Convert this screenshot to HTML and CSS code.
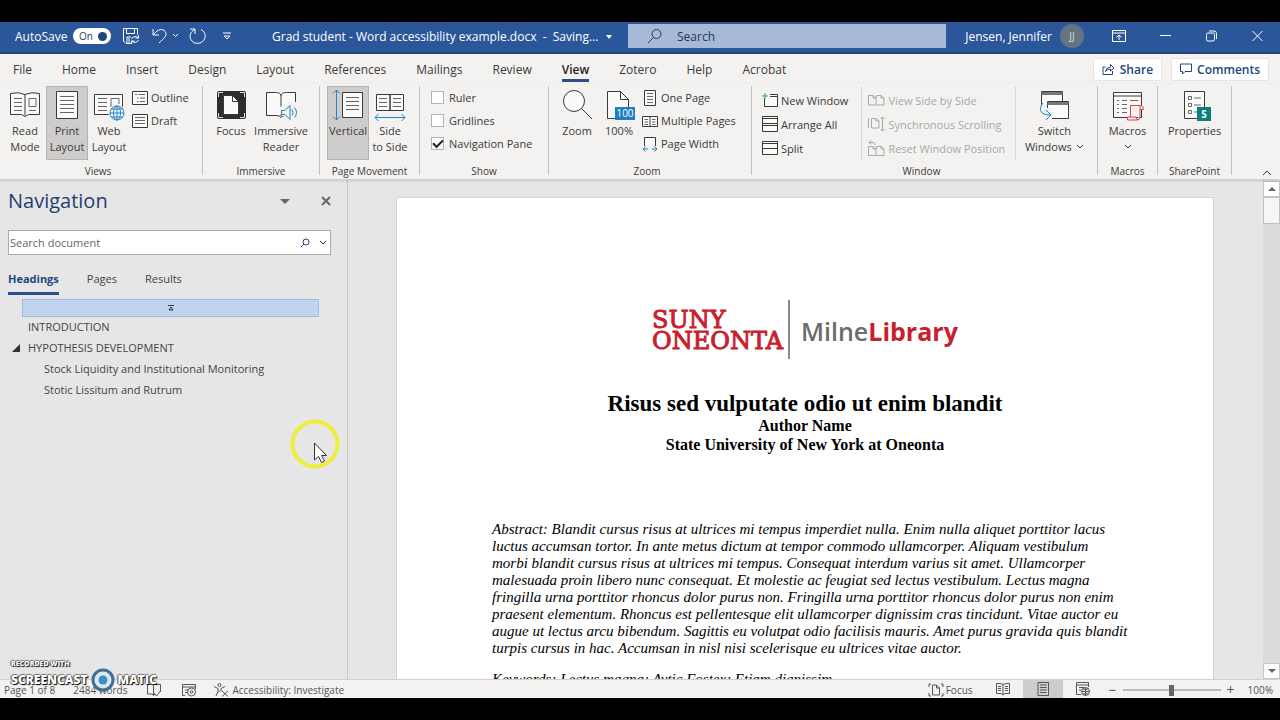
FILE: index.html
```html
<!DOCTYPE html>
<html lang="en">
<head>
<meta charset="utf-8">
<title>Grad student - Word accessibility example.docx</title>
<link rel="stylesheet" href="styles.css">
</head>
<body>
<div class="app">
  <header class="titlebar">
    <div class="quick">
      <label class="autosave" for="autosave">AutoSave</label>
      <button class="toggle" id="autosave" aria-pressed="true">On<span class="knob"></span></button>
      <button class="qbtn" aria-label="Save"><svg width="18" height="18" viewBox="0 0 18 18"><path d="M9 16.500H4L1.500 14V1.500h14v6M4.500 1.500v5h8v-5M5 16v-6h4M7 11v5"/><path d="M9.500 12a4 3.500 0 0 1 7-1M16.500 8v3h-3M16.500 13a4 3.500 0 0 1-7 1M9.500 17v-3h3"/></svg></button>
      <button class="qbtn undo" aria-label="Undo"><svg width="28" height="18" viewBox="0 0 28 18"><path d="M2 2v6h6M2 8l4-4c4-3 9-1 9 3 0 3-2 4-7 9M22 7l2.500 2.500L27 7"/></svg></button>
      <button class="qbtn redo" aria-label="Repeat"><svg width="18" height="18" viewBox="0 0 18 18"><path d="M1 2h5v5M6 2.500C0 5 0 11 3 14c3 3.500 9 3 12-1 3-5 0-9-3-10.500"/></svg></button>
      <button class="qbtn more" aria-label="Customize toolbar"><svg width="8" height="8" viewBox="0 0 8 8"><path d="M0 1h8M1 4l3 3 3-3z"/></svg></button>
    </div>
    <div class="doctitle">Grad student - Word accessibility example.docx&nbsp; - &nbsp;Saving... <span class="caret"></span></div>
    <div class="search"><svg width="16" height="16" viewBox="0 0 16 16"><circle cx="9.500" cy="6" r="4.500"/><path d="M6.500 9.500L1 15"/></svg><input aria-label="Search" placeholder="Search"></div>
    <div class="account"><span>Jensen, Jennifer</span><span class="avatar">JJ</span></div>
    <div class="winbtns">
      <button aria-label="Ribbon display options"><svg width="14" height="12" viewBox="0 0 14 12"><path d="M.5.500h13v11H.5zM.5 3h13M7 10V5M4.500 7.500L7 5l2.500 2.500"/></svg></button>
      <button aria-label="Minimize"><svg width="11" height="12" viewBox="0 0 11 12"><path d="M0 5.500h11"/></svg></button>
      <button aria-label="Restore"><svg width="11" height="12" viewBox="0 0 11 12"><rect x=".5" y="3" width="8" height="8" rx="1.500"/><path d="M3 1h5q2.500 0 2.500 2.500V9"/></svg></button>
      <button aria-label="Close"><svg width="11" height="12" viewBox="0 0 11 12"><path d="M.5 1l10 10M10.500 1l-10 10"/></svg></button>
    </div>
  </header>

  <nav class="tabs">
    <button>File</button><button>Home</button><button>Insert</button><button>Design</button><button>Layout</button><button>References</button><button>Mailings</button><button>Review</button><button class="active">View</button><button>Zotero</button><button>Help</button><button>Acrobat</button>
    <div class="tabactions">
      <button class="pill"><svg width="13" height="12" viewBox="0 0 13 12"><path d="M3.500 4H1v7.500h9.500V8M3.500 8.500Q4 4.500 8.500 4V1.500L12 5 8.500 8V6Q5.500 6 3.500 8.500z"/></svg>Share</button>
      <button class="pill"><svg width="12" height="12" viewBox="0 0 12 12"><path d="M.5 1h11v7.500H5L2.500 11V8.500h-2z"/></svg>Comments</button>
    </div>
  </nav>

  <section class="ribbon" aria-label="View ribbon">
    <div class="group">
      <div class="tools">
        <button class="big"><svg width="32" height="32" viewBox="0 0 32 32"><path class="w" d="M1.500 4.500q8-2 14.500 1 6.500-3 14.500-1v21h-11L16 27.500l-3.500-2h-11z"/><path d="M16 5.500v21"/><path class="g" d="M5 9.500h8M5 13.500h8M5 17.500h8M5 21.500h8M20 9.500h7v8h-7zM20 21.500h7"/></svg><span>Read<br>Mode</span></button>
        <button class="big on"><svg width="32" height="32" viewBox="0 0 32 32"><path class="w" d="M5.500 2.500h21v27h-21z"/><path class="g" d="M9 7.500h14M9 11.500h14M9 15.500h14M9 19.500h14M9 23.500h14"/></svg><span>Print<br>Layout</span></button>
        <button class="big"><svg width="32" height="32" viewBox="0 0 32 32"><path class="w" d="M1.500 5.500h28v20h-28z"/><path class="g" d="M5 9.500h9M5 13.500h9M5 17.500h9M5 21.500h9M18 18V9.500h8V15"/><circle class="halo" cx="24" cy="24" r="8.500"/><g class="blue"><circle cx="24" cy="24" r="7"/><ellipse cx="24" cy="24" rx="3.500" ry="7"/><path d="M24 17v14M17 24h14M18 20h12M18 28h12"/></g></svg><span>Web<br>Layout</span></button>
        <div class="stack">
          <button class="small"><svg width="16" height="16" viewBox="0 0 16 16"><path class="w" d="M.5 1.500h15v13H.5z"/><path class="g" d="M3 4.500h2M6.500 4.500H13M5 8h1.500M8 8h5M5 11.500h1.500M8 11.500h5"/></svg>Outline</button>
          <button class="small"><svg width="16" height="16" viewBox="0 0 16 16"><path class="w" d="M.5 1.500h15v13H.5z"/><path class="g" d="M3 4.500h10M3 7.500h10M3 10.500h10"/></svg>Draft</button>
        </div>
      </div>
      <h2>Views</h2>
    </div>
    <div class="group immersive">
      <div class="tools">
        <button class="big"><svg width="32" height="32" viewBox="0 0 32 32"><rect class="dark" x="2" y="2" width="29" height="28" rx="2"/><path class="corner" d="M3.500 8V3.500H8M25 3.500h4.500V8M3.500 24v4.500H8M25 28.500h4.500V24"/><path class="w" d="M8.500 6.500h9l6 6v13h-15z"/><path d="M17.500 6.500v6h6"/></svg><span>Focus</span></button>
        <button class="big wide"><svg width="34" height="32" viewBox="0 0 34 32"><path class="w" d="M2.500 3.500h9q5 0 5.500 3 .5-3 5.500-3h9v23H22q-4 0-5 2-1-2-5-2H2.500z"/><path d="M17 6v21"/><path class="halofill" d="M16 18l9-5h9v17h-9l-9-5z"/><g class="blue"><path d="M17.500 21.500H21l5-5v14l-5-5h-3.500zM28 20.500q2 3 0 6M30.500 18.500q4 5 0 10"/></g></svg><span>Immersive<br>Reader</span></button>
      </div>
      <h2>Immersive</h2>
    </div>
    <div class="group movement">
      <div class="tools">
        <button class="big on"><svg width="32" height="32" viewBox="0 0 32 32"><path class="w" d="M10.500 3.500h20v25h-20z"/><path class="g" d="M14 8.500h13M14 12.500h13M14 16.500h13M14 20.500h13"/><path class="blue" d="M4.500 1v30M1 4.500L4.500 1 8 4.500M1 27.500L4.500 31 8 27.500"/></svg><span>Vertical</span></button>
        <button class="big"><svg width="32" height="32" viewBox="0 0 32 32"><path class="w" d="M2.500 5.500h13.500v16H2.500zM16 5.500h13.500v16H16z"/><path class="g" d="M5 9.500h8M5 13.500h8M5 17.500h8M19 9.500h8M19 13.500h8M19 17.500h8"/><path class="blue" d="M1 28.500h30M4.500 25L1 28.500 4.500 32M27.500 25l3.500 3.500-3.500 3.500"/></svg><span>Side<br>to Side</span></button>
      </div>
      <h2>Page Movement</h2>
    </div>
    <div class="group show">
      <div class="tools">
        <div class="stack">
          <label class="check"><input type="checkbox">Ruler</label>
          <label class="check"><input type="checkbox">Gridlines</label>
          <label class="check"><input type="checkbox" checked>Navigation Pane</label>
        </div>
      </div>
      <h2>Show</h2>
    </div>
    <div class="group zoom">
      <div class="tools">
        <button class="big"><svg width="32" height="32" viewBox="0 0 32 32"><circle class="w" cx="13" cy="12" r="10.500"/><path d="M20.500 19.500L31 30"/></svg><span>Zoom</span></button>
        <button class="big"><svg width="32" height="32" viewBox="0 0 32 32"><path class="w" d="M4.500 2.500h13l8 8v19h-21z"/><path d="M17.500 2.500v8h8"/><rect class="bluefill" x="12" y="18" width="20" height="13"/><text x="22" y="28" class="badge">100</text></svg><span>100%</span></button>
        <div class="stack">
          <button class="small"><svg width="16" height="16" viewBox="0 0 16 16"><path class="w" d="M2.500.500h11v15h-11z"/><path class="g" d="M5 3.500h6M5 6.500h6M5 9.500h6M5 12.500h6"/></svg>One Page</button>
          <button class="small"><svg width="16" height="16" viewBox="0 0 16 16"><path class="w" d="M.5 3.500h15v10H.5zM8 3.500v10"/><path class="g" d="M2.500 6.500h3.500M2.500 9h3.500M2.500 11.500h3.500M10 6.500h3.500M10 9h3.500M10 11.500h3.500"/></svg>Multiple Pages</button>
          <button class="small"><svg width="16" height="16" viewBox="0 0 16 16"><path class="w" d="M2.500 10V1.500h11V10"/><path class="blue" d="M1 13h5M10 13h5M3.500 10.500L1 13l2.500 2.500M12.500 10.500L15 13l-2.500 2.500"/></svg>Page Width</button>
        </div>
      </div>
      <h2>Zoom</h2>
    </div>
    <div class="group window">
      <div class="tools">
        <div class="stack tall">
          <button class="small"><svg width="16" height="16" viewBox="0 0 16 16"><path class="w" d="M2.500 6v8.500h13V2.500H8"/><path d="M8 4.500h7"/><path class="green" d="M0 4h6M3 1v6"/></svg>New Window</button>
          <button class="small"><svg width="16" height="16" viewBox="0 0 16 16"><path class="w" d="M.5.500h15v7H.5zM.5 7.500h15v8H.5z"/><path d="M0 2.500h16M0 9.500h16"/></svg>Arrange All</button>
          <button class="small"><svg width="16" height="16" viewBox="0 0 16 16"><path class="w" d="M.5 1.500h15v13H.5z"/><path d="M0 3.500h16M0 8.500h16"/></svg>Split</button>
        </div>
        <div class="stack tall ruled">
          <button class="small" disabled><svg width="17" height="16" viewBox="0 0 17 16"><path d="M.5 3.500H5L8 6v7H.500zM5 3.500V6h3M8.500 6V3.500H13L16 6v7H8.500M13 3.500V6h3"/></svg>View Side by Side</button>
          <button class="small" disabled><svg width="17" height="16" viewBox="0 0 17 16"><path d="M.5 2v10M3.500 2.500H8L11 5v7H3.500zM8 2.500V5h3M14.500 1v14M12.500 3l2-2 2 2M12.500 13l2 2 2-2"/></svg>Synchronous Scrolling</button>
          <button class="small" disabled><svg width="17" height="16" viewBox="0 0 17 16"><path d="M.5 6.500H5L8 9v6.500H.5zM5 6.500V9h3M8.500 9V6.500H13L16 9v6.500H8.500M13 6.500V9h3M1 2.500h4q2 0 2 3M3 .500l-2 2 2 2"/></svg>Reset Window Position</button>
        </div>
        <button class="big switch"><svg width="32" height="32" viewBox="0 0 32 32"><path class="w" d="M3.500 16V2.500h21V12"/><path class="bar" d="M3.500 4.500h21"/><path class="w" d="M9.500 12.500h21v17h-21z"/><path class="bar" d="M9.500 14.500h21"/><path class="halofill" d="M2 19h12v11H2z"/><path class="blue" d="M5 14c-5 6-3 12 7 12M8 21l5 5-5 5"/></svg><span>Switch</span><span class="with">Windows <svg class="chev" width="8" height="6" viewBox="0 0 8 6"><path d="M1 1l3 3 3-3"/></svg></span></button>
      </div>
      <h2>Window</h2>
    </div>
    <div class="group macros">
      <div class="tools">
        <button class="big"><svg width="32" height="32" viewBox="0 0 32 32"><path class="w" d="M1.500 3.500h28v25h-28z"/><path d="M1.500 7h28"/><path class="g" d="M5 11.500h2M10 11.500h5M18 11.500h8M5 15.500h2M10 15.500h5M5 19.500h2M10 19.500h5M5 23.500h2M10 23.500h5"/><path class="red" d="M18.500 28V16.500H29q2.500 0 2.500 4H28M28 17v11q0 3-3 3h-9.500v-3H24q0 3 2 3"/></svg><span>Macros</span><svg class="chev" width="8" height="6" viewBox="0 0 8 6"><path d="M1 1l3 3 3-3"/></svg></button>
      </div>
      <h2>Macros</h2>
    </div>
    <div class="group sharepoint">
      <div class="tools">
        <button class="big wide"><svg width="32" height="32" viewBox="0 0 32 32"><path class="w" d="M5.500 2.500h20v27h-20z"/><path class="g" d="M9.500 7.500h3v3h-3zM15 9h7M9.500 14.500h3v3h-3zM15 16h7M9.500 21.500h3v3h-3zM15 23h4"/><rect class="teal" x="18" y="18" width="14" height="14"/><text x="25" y="29" class="badge s">S</text></svg><span>Properties</span></button>
      </div>
      <h2>SharePoint</h2>
    </div>
    <button class="collapse" aria-label="Collapse ribbon"><svg width="10" height="7" viewBox="0 0 10 7"><path d="M1 6l4-4 4 4"/></svg></button>
  </section>

  <main class="work">
    <aside class="navpane">
      <div class="navhead"><h1>Navigation</h1><button class="drop" aria-label="Pane options"></button><button aria-label="Close pane"><svg width="10" height="10" viewBox="0 0 10 10"><path d="M1 1l8 8M9 1L1 9"/></svg></button></div>
      <div class="navsearch"><input aria-label="Search document" placeholder="Search document"><button aria-label="Find"><svg width="10" height="10" viewBox="0 0 10 10"><circle cx="6" cy="4" r="3"/><path d="M4 6L1 9"/></svg></button><button aria-label="Search options"><svg class="chev" width="8" height="6" viewBox="0 0 8 6"><path d="M1 1l3 3 3-3"/></svg></button></div>
      <div class="navtabs"><button class="active">Headings</button><button>Pages</button><button>Results</button></div>
      <div class="totop"><svg width="6" height="6" viewBox="0 0 6 6"><path d="M0 .500h6M3 2l2 3H1z"/></svg></div>
      <ul class="tree">
        <li>INTRODUCTION</li>
        <li><span class="twist"></span>HYPOTHESIS DEVELOPMENT</li>
        <li class="sub">Stock Liquidity and Institutional Monitoring</li>
        <li class="sub">Stotic Lissitum and Rutrum</li>
      </ul>
      <svg class="pointer" width="52" height="52" viewBox="0 0 52 52"><circle cx="26" cy="26" r="22.500"/><path d="M25.500 25v17l4-3.500 3 6 3-1.500-3-5.500h5z"/></svg>
    </aside>
    <div class="canvas">
      <article class="page">
        <div class="logo"><div class="suny">SUNY<br>ONEONTA</div><div class="milne">Milne<b>Library</b></div></div>
        <h2>Risus sed vulputate odio ut enim blandit</h2>
        <p class="by">Author Name<br>State University of New York at Oneonta</p>
        <p class="abstract">Abstract: Blandit cursus risus at ultrices mi tempus imperdiet nulla. Enim nulla aliquet porttitor lacus<br>luctus accumsan tortor. In ante metus dictum at tempor commodo ullamcorper. Aliquam vestibulum<br>morbi blandit cursus risus at ultrices mi tempus. Consequat interdum varius sit amet. Ullamcorper<br>malesuada proin libero nunc consequat. Et molestie ac feugiat sed lectus vestibulum. Lectus magna<br>fringilla urna porttitor rhoncus dolor purus non. Fringilla urna porttitor rhoncus dolor purus non enim<br>praesent elementum. Rhoncus est pellentesque elit ullamcorper dignissim cras tincidunt. Vitae auctor eu<br>augue ut lectus arcu bibendum. Sagittis eu volutpat odio facilisis mauris. Amet purus gravida quis blandit<br>turpis cursus in hac. Accumsan in nisl nisi scelerisque eu ultrices vitae auctor.</p>
        <p class="abstract">Keywords: Lectus magna; Aytic Fostex; Etiam dignissim</p>
      </article>
      <div class="scroll"><button class="up" aria-label="Scroll up"></button><div class="thumb"></div><button class="down" aria-label="Scroll down"></button></div>
    </div>
  </main>

  <footer class="status">
    <span class="pageno">Page 1 of 8</span><span class="words">2484 words</span>
    <svg width="16" height="14" viewBox="0 0 16 14"><path d="M7.500 12.500L6 11H1.500V1.500H6L7.500 3v9.500L9 11M9 1.500h5.500V9M8 10l2.500 3L14.500 8"/></svg>
    <svg class="rec" width="16" height="14" viewBox="0 0 16 14"><path d="M4 12.500H1.500v-11h13V6M1.500 4h13M4 7h3M4 9.500h2"/><circle cx="10.500" cy="9" r="4"/><circle cx="10.500" cy="9" r="1.300"/></svg>
    <button class="access"><svg width="16" height="14" viewBox="0 0 16 14"><circle cx="6.500" cy="2" r="1.500"/><path d="M1 3.500l4 2v3L3 13M12 3.500l-4 2v3M5 9.500l2-2M9 8l6 5.500M15 8l-6 5.500"/></svg>Accessibility: Investigate</button>
    <div class="modes">
      <button class="focus"><svg width="16" height="14" viewBox="0 0 16 14"><path d="M3 1H1v3M13 1h2v3M1 10v3h2M15 10v3h-2M4.500 2h4l3 3v7h-7zM8.500 2v3h3"/></svg>Focus</button>
      <button class="mode" aria-label="Read mode"><svg width="14" height="14" viewBox="0 0 14 14"><path d="M7 2.500Q4 1 .500 1.500v10H5l2 1.500 2-1.500h4.500v-10Q10 1 7 2.500zM7 2.500V12M2 4.500h3M2 6.500h3M2 8.500h3M9 4.500h3M9 6.500h3M9 8.500h3"/></svg></button>
      <button class="mode on" aria-label="Print layout"><svg width="14" height="14" viewBox="0 0 14 14"><path d="M2 .500h10.500v13H2zM4 3h6.500M4 5.500h6.500M4 8h6.500M4 10.500h6.500"/></svg></button>
      <button class="mode" aria-label="Web layout"><svg width="14" height="14" viewBox="0 0 14 14"><path d="M5 12.500H.5v-12h12V5M.5 3h12M3 5.500h5M3 8h2"/><circle cx="9.500" cy="9.500" r="4"/><path d="M5.500 9.500h8M9.500 5.500v8M7 7q2.500 1 5 0M7 12q2.500-1 5 0"/></svg></button>
      <button class="step" aria-label="Zoom out">−</button><input type="range" min="10" max="190" value="100" aria-label="Zoom level"><button class="step" aria-label="Zoom in">+</button><span class="pct">100%</span>
    </div>
    <div class="mark"><small>RECORDED WITH</small><div>SCREENCAST<svg width="24" height="24" viewBox="0 0 24 24"><circle cx="12" cy="12" r="10"/><circle class="dot" cx="12" cy="12" r="4.500"/></svg>MATIC</div></div>
  </footer>
</div>
</body>
</html>
```

FILE: styles.css
```css
* { box-sizing: border-box; }
body { margin: 0; background: #000; font-family: "Open Sans", "Noto Sans", sans-serif; font-size: 12px; color: #3b3a39; }
button, input { font: inherit; color: inherit; }
button { border: 0; background: none; padding: 0; margin: 0; }
svg { display: block; flex: none; fill: none; stroke: currentColor; }
h1, h2, p, ul { margin: 0; padding: 0; font-weight: 400; }
.app { height: 100vh; padding: 22px 0; display: grid; grid-template-rows: 32px 30px 96px minmax(0, 1fr) 19px; }

.titlebar { background: #2b579a; border-bottom: 2px solid #204680; padding-bottom: 2px; color: #fff; display: grid; grid-template-columns: 272px 356px minmax(0, 318fr) 150px 184px; align-items: center; white-space: nowrap; }
.quick { display: flex; align-items: center; padding-left: 15px; }
.autosave { width: 58px; }
.toggle { display: flex; align-items: center; justify-content: space-between; width: 38px; height: 16px; padding: 0 4px 0 6px; border-radius: 8px; background: #fff; color: #2b3f63; font-size: 10px; }
.knob { width: 9px; height: 9px; border-radius: 50%; background: #204680; }
.qbtn { margin-left: 11px; }
.redo { margin-left: 10px; }
.more { margin-left: 16px; }
.caret { display: inline-block; margin: 0 0 2px 4px; border: 3px solid transparent; border-top: 4px solid #fff; border-bottom: 0; }
.search { height: 24px; background: #a6b9d6; color: #1f3864; display: flex; align-items: center; padding-left: 19px; gap: 14px; }
.search input { flex: 1; min-width: 0; border: 0; background: none; padding: 0; }
.search input::placeholder { color: #1f3864; opacity: 1; }
.account { display: flex; align-items: center; justify-content: flex-end; gap: 8px; padding-right: 12px; }
.avatar { width: 24px; height: 24px; border-radius: 50%; background: #65757f; color: #d5dade; font-size: 10px; line-height: 24px; text-align: center; }
.winbtns { display: grid; grid-template-columns: repeat(4, 1fr); justify-items: center; }

.tabs { background: #f3f2f1; display: flex; gap: 30px; padding: 0 11px 0 13px; align-items: stretch; white-space: nowrap; }
.tabs > button { border-top: 3px solid transparent; border-bottom: 3px solid transparent; margin-bottom: 2px; padding-top: 2px; }
.tabs > .active { border-bottom-color: #2b4f8c; font-weight: 600; color: #222; }
.tabactions { margin-left: auto; display: flex; gap: 9px; align-items: center; }
.pill { display: flex; align-items: center; gap: 5px; height: 23px; padding: 0 8px; background: #fff; border: 1px solid #e6e5e4; border-radius: 2px; color: #204680; font-weight: 600; }

.ribbon { background: #f3f2f1; border-bottom: 1px solid #d2d0ce; padding-top: 2px; display: grid; grid-template-columns: 203fr 117fr 100fr 129fr 203fr 346fr 60fr 74fr 48fr; font-size: 11px; position: relative; z-index: 1; box-shadow: 0 1px 3px #0002; white-space: nowrap; }
.group { display: flex; flex-direction: column; border-right: 1px solid #c4c2c0; margin-bottom: 4px; min-width: 0; }
.group h2 { font-size: 10px; line-height: 14px; text-align: center; margin: 4px 0 -3px; padding-right: 6px; }
.tools { display: flex; padding-left: 4px; height: 74px; }
.big { width: 42px; display: flex; flex-direction: column; align-items: center; line-height: 16px; padding-top: 2px; border: 1px solid transparent; text-align: center; }
.big > svg:first-child { margin-bottom: 2px; }
.big.on { background: #cfcdcb; border-color: #b5b3b1; }
.big.wide { width: 58px; }
.w { fill: #fafafa; }
.g { stroke: #666; }
.blue { stroke: #2484bd; }
.blue * { fill: #f8fbfd; }
.blue ellipse, .blue path { fill: none; }
.bluefill { fill: #1e7fc0; stroke: none; }
.halo, .halofill { fill: #f3f2f1; stroke: none; }
.dark { fill: #2d2d2d; stroke: none; }
.corner { stroke: #ddd; }
.green { stroke: #3f9b63; }
.red { stroke: #d9474a; fill: #fbf0f0; }
.teal { fill: #0b7f79; stroke: none; }
.bar { stroke: #777; stroke-width: 3; }
.badge { fill: #fff; stroke: none; font-size: 10px; text-anchor: middle; }
.badge.s { font-weight: 700; }
.stack { display: flex; flex-direction: column; padding-left: 2px; }
.small { display: flex; align-items: center; gap: 3px; height: 23px; color: #3b3a39; }
.small:disabled { color: #aaa8a6; }
.stack.tall .small { height: 24px; }
.immersive .tools, .movement .tools, .zoom .tools { padding-left: 7px; }
.immersive h2, .movement h2, .show h2 { padding-right: 0; }
.show .tools { padding-left: 9px; }
.check { display: flex; align-items: center; gap: 5px; height: 23px; }
.check input { appearance: none; width: 13px; height: 13px; margin: 0; background: #fff; border: 1px solid #b5b3b1; display: grid; place-items: center; }
.check input:checked::after { content: ""; width: 8px; height: 4px; border: solid #222; border-width: 0 0 2px 2px; transform: rotate(-45deg) translate(1px, -1px); }
.window .stack { padding-top: 2px; }
.window .tools { padding-left: 8px; }
.window .ruled { margin-left: 13px; padding: 2px 10px 0 6px; border: solid #dddbd9; border-width: 0 1px; }
.window .switch { width: 76px; }
.with { display: flex; align-items: center; gap: 4px; }
.macros .tools, .sharepoint .tools { padding: 0; justify-content: center; }
.macros .chev { margin-top: 5px; }
.macros h2, .sharepoint h2 { padding: 0; }
.collapse { align-self: end; justify-self: end; padding: 0 8px 3px 0; }

.work { display: grid; grid-template-columns: 348px minmax(0, 1fr); background: #e6e6e6; min-height: 0; overflow: hidden; }
.navpane { border-right: 1px solid #c6c6c6; padding: 6px 16px 0 8px; position: relative; color: #444; }
.navhead { display: flex; align-items: center; gap: 31px; color: #666; }
.navhead h1 { flex: 1; font-size: 20px; line-height: 30px; color: #1f3f6f; }
.navhead svg { stroke-width: 2; }
.drop { border: 5px solid transparent; border-top-color: #666; border-bottom: 0; }
.navsearch { display: flex; align-items: center; gap: 9px; margin-top: 14px; height: 25px; background: #fff; border: 1px solid #ababab; padding-right: 3px; color: #204680; font-size: 11px; }
.navsearch input { flex: 1; min-width: 0; border: 0; padding: 0 1px; background: none; }
.navsearch input::placeholder { color: #666; opacity: 1; }
.navsearch .chev { color: #222; }
.navtabs { display: flex; gap: 28px; margin-top: 11px; font-size: 11px; }
.navtabs button { height: 29px; border-bottom: 3px solid transparent; padding-bottom: 2px; }
.navtabs .active { color: #204680; font-weight: 700; border-color: #2b4f8c; }
.totop { margin: 4px 12px 0 14px; height: 18px; background: #c2d3f0; border: 1px solid #a4bbdf; display: grid; place-items: center; }
.totop svg { stroke: #333; }
.tree { list-style: none; font-size: 11px; line-height: 21px; padding-left: 20px; margin-top: -1px; white-space: nowrap; }
.tree .sub { padding-left: 16px; }
.twist { display: inline-block; width: 0; margin-left: -16px; margin-right: 8px; border-left: 8px solid transparent; border-bottom: 8px solid #333; }
.pointer { position: absolute; left: 289px; top: 238px; }
.pointer circle { stroke: #eeee3c; stroke-width: 4; }
.pointer path { fill: #fff; stroke: #333; }
.canvas { display: grid; grid-template-columns: minmax(0, 1fr) 17px; padding-left: 48px; min-height: 0; }
.page { margin: 17px 49px 0 0; background: #fff; border: 1px solid #d4d4d4; border-bottom: 0; padding: 102px 95px 0 95px; color: #000; font-family: "Liberation Serif", serif; overflow: hidden; text-align: center; white-space: nowrap; }
.logo { display: flex; justify-content: center; height: 59px; align-items: center; }
.suny { font: 24px/21px "DejaVu Serif", serif; -webkit-text-stroke: 1px #c8202f; color: #c8202f; text-align: left; padding: 3px 5px 0 0; }
.milne { border-left: 2px solid #888; height: 59px; padding-left: 11px; font: 600 25px/62px "Open Sans", sans-serif; color: #6b6d68; }
.milne b { color: #c8202f; font-weight: 700; }
.page h2 { font-size: 23px; line-height: 26px; font-weight: 700; margin-top: 32px; }
.by { font-size: 16px; line-height: 19px; font-weight: 700; margin: -1px 0 67px; }
.abstract { font-size: 15px; line-height: 17px; font-style: italic; text-align: left; margin-bottom: 14px; }
.scroll { background: #dcdcdc; display: flex; flex-direction: column; align-items: stretch; padding-top: 1px; }
.scroll button { height: 16px; background: #fff; border: 1px solid #c6c6c6; display: grid; place-items: center; }
.scroll button::after { content: ""; border: 4px solid transparent; }
.scroll .up::after { border-bottom-color: #666; border-top: 0; }
.scroll .down::after { border-top-color: #666; border-bottom: 0; }
.thumb { height: 27px; background: #f6f6f6; border: 1px solid #c0c0c0; }
.scroll .down { margin-top: auto; }

.status { background: #f3f2f1; border-top: 1px solid #d2d0ce; display: flex; align-items: center; font-size: 10px; padding: 2px 7px 0 4px; position: relative; color: #555; white-space: nowrap; line-height: 18px; }
.words { margin: 0 19px 0 18px; }
.rec { margin-left: 19px; }
.access { display: flex; align-items: center; gap: 3px; margin-left: 16px; }
.modes { margin-left: auto; display: flex; align-items: center; }
.focus { display: flex; align-items: center; gap: 2px; margin-right: 10px; }
.mode { width: 40px; height: 18px; display: grid; place-items: center; margin-top: -2px; }
.mode.on { background: #cfcdcb; }
.step { font-size: 14px; width: 20px; line-height: 16px; }
.status input { appearance: none; width: 98px; height: 16px; margin: 0; background: linear-gradient(#bdbbb5, #bdbbb5) center / 100% 2px no-repeat; }
.status input::-webkit-slider-thumb { appearance: none; width: 5px; height: 11px; background: #666; }
.pct { margin-left: 7px; }
.mark { position: absolute; left: 11px; bottom: 6px; color: #fff; font-weight: 800; text-shadow: 1px 1px 1px #000, -1px 0 1px #555, 0 -1px 1px #777; line-height: 10px; }
.mark small { display: block; font-size: 7px; line-height: 8px; }
.mark div { display: flex; align-items: center; gap: 3px; font-size: 12px; line-height: 24px; }
.mark svg { stroke: #416f91; stroke-width: 3; fill: #dce7ef; }
.mark .dot { fill: #398fc7; stroke: none; }
```
